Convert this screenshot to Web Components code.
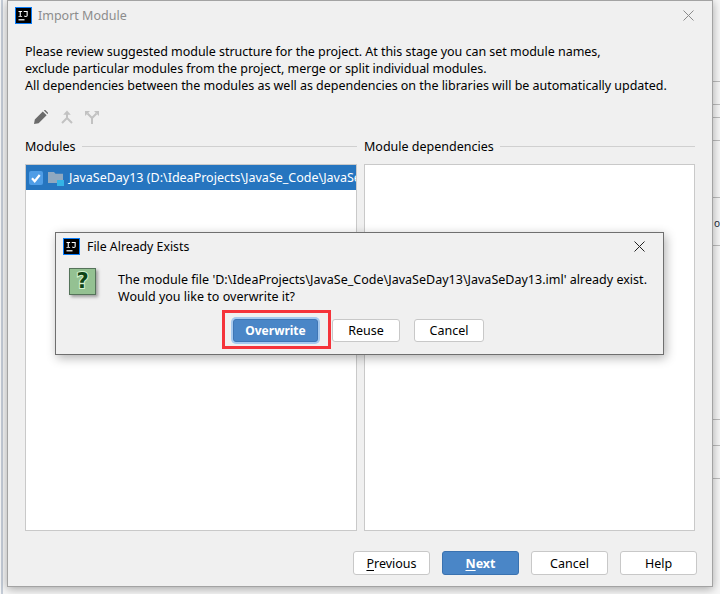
<!DOCTYPE html>
<html>
<head>
<meta charset="utf-8">
<title>Import Module</title>
<style>
  html, body { margin: 0; padding: 0; width: 720px; height: 594px; overflow: hidden; background: #f7f7f7; }
  body { font: 13px "Noto Sans", "Open Sans", sans-serif; color: #000; }
</style>
</head>
<body>
<ij-desktop>
  <ij-window style="left:7px;top:0;width:706px;height:587px" heading="Import Module" dimmed>
    <ij-import-body></ij-import-body>
  </ij-window>
  <ij-window style="left:55px;top:232px;width:609px;height:123px" heading="File Already Exists" front>
    <ij-exists-body></ij-exists-body>
  </ij-window>
  <ij-mark style="left:222px;top:310px;width:103px;height:33px"></ij-mark>
</ij-desktop>

<script>
// IntelliJ logo, used in both title bars
const LOGO = `
<svg width="17" height="17" viewBox="0 0 17 17" style="display:block">
  <rect x="0.5" y="0.5" width="16" height="16" fill="#000" stroke="#087cfa"/>
  <path d="M3.500 4h3.600v.9H5.800v4h1.300v.9H3.500v-.9h1.200v-4H3.500zM8.700 4h4v4.600c0 .9-.7 1.300-1.900 1.300-.7 0-1.300-.2-1.800-.5l.4-.8c.4.2.8.4 1.300.4.6 0 .9-.2.9-.6V4.900H8.700z" fill="#fff"/>
  <rect x="3.500" y="12.200" width="6" height="1.200" fill="#fff"/>
</svg>`;

class IjDesktop extends HTMLElement {
  constructor() {
    super();
    this.attachShadow({ mode: 'open' });
    // rows of the IDE window that is left behind the dialog
    const rows = [81, 104, 117, 140, 197, 245, 419, 445, 478]
      .map(y => `<i style="top:${y}px"></i>`).join('');
    this.shadowRoot.innerHTML = `
      <style>
        :host { display: block; position: relative; width: 720px; height: 594px; overflow: hidden; }
        .edge { position: absolute; left: 1px; top: 0; width: 2px; height: 594px; background: #c5cdd8; }
        .behind { position: absolute; left: 712px; top: 0; width: 8px; height: 594px; }
        .behind i { position: absolute; left: 0; width: 8px; height: 1px; background: #bdbdbd; }
        .behind b { position: absolute; left: 2px; top: 216px; font: 400 10px/14px "Noto Sans", sans-serif; color: #1d2a3a; }
      </style>
      <div class="edge"></div>
      <div class="behind">${rows}<b>o</b></div>
      <slot></slot>`;
  }
}

class IjWindow extends HTMLElement {
  constructor() {
    super();
    this.attachShadow({ mode: 'open' });
    this.shadowRoot.innerHTML = `
      <style>
        :host { display: flex; flex-direction: column; position: absolute; box-sizing: border-box;
                background: #f0f0f0; border: 1px solid #a3a3a3;
                box-shadow: 0 2px 9px rgba(0,0,0,.33); }
        :host([front]) { border-color: #6f6f6f; box-shadow: 2px 3px 10px rgba(0,0,0,.3); }
        .bar { display: flex; align-items: center; flex: none; box-sizing: border-box; height: 30px; padding: 0 18px 4px 7px; gap: 7px; color: #8c8c8c; font-size: 12.3px; }
        :host([dimmed]) .bar { height: 31px; padding: 0 18px 2px 7px; gap: 6px; font-size: 12.5px; }
        :host([front]) .bar { color: #000; }
        .title { flex: 1; }
        svg.x { display: block; }
        .x path { stroke: #8a8a8a; }
        :host([front]) .x path { stroke: #222; }
      </style>
      <div class="bar">
        <span class="logo">${LOGO}</span>
        <span class="title">${this.getAttribute('heading')}</span>
        <svg class="x" width="11" height="11" viewBox="0 0 11 11"><path d="M.5.5l10 10M10.500.5l-10 10" fill="none"/></svg>
      </div>
      <slot></slot>`;
  }
}

class IjButton extends HTMLElement {
  constructor() {
    super();
    this.attachShadow({ mode: 'open' });
    this.shadowRoot.innerHTML = `
      <style>
        :host { display: flex; align-items: center; justify-content: center; box-sizing: border-box;
                width: 77px; height: 24px; background: #fff; border: 1px solid #c8c8c8; border-radius: 3px;
                font-size: 12.5px; color: #000; }
        :host([primary]) { background: #4a86c7; border-color: #3a72b0; color: #fff; font-weight: 700; }
        :host([focused]) { background: #4a86c7; border: 1px solid #3f76b5; color: #fff; font-weight: 700; font-size: 12px;
                           box-shadow: 0 0 0 2px #a5c9ef; }
      </style>
      <slot></slot>`;
  }
}

class IjTitled extends HTMLElement {
  constructor() {
    super();
    this.attachShadow({ mode: 'open' });
    this.shadowRoot.innerHTML = `
      <style>
        :host { display: flex; flex-direction: column; min-width: 0; }
        .head { display: flex; align-items: center; gap: 6px; height: 18px; margin-bottom: 9px; font-size: 12.5px; white-space: nowrap; }
        .head i { flex: 1; height: 1px; background: #d0d0d0; }
        .box { flex: 1; box-sizing: border-box; background: #fff; border: 1px solid #c9c9c9; overflow: hidden; }
      </style>
      <div class="head"><span>${this.getAttribute('label')}</span><i></i></div>
      <div class="box"><slot></slot></div>`;
  }
}

class IjModuleRow extends HTMLElement {
  constructor() {
    super();
    this.attachShadow({ mode: 'open' });
    this.shadowRoot.innerHTML = `
      <style>
        :host { display: flex; align-items: center; height: 25px; padding-left: 3px; gap: 5px;
                background: #2675bf; color: #fff; font-size: 12.5px; white-space: nowrap; overflow: hidden; }
        svg { display: block; flex: none; }
      </style>
      <svg width="14" height="14" viewBox="0 0 14 14">
        <rect width="14" height="14" rx="2" fill="#4f9de6"/>
        <path d="M3 7.300l2.700 2.900 5-6.200" fill="none" stroke="#fff" stroke-width="2.200"/>
      </svg>
      <svg width="16" height="17" viewBox="0 0 16 17">
        <path d="M0 3h6l1.500 1.800H15V14H0z" fill="#8fa8c0"/>
        <rect x="9" y="11" width="7" height="6" fill="#35b4e6"/>
      </svg>
      <span><slot></slot></span>`;
  }
}

class IjImportBody extends HTMLElement {
  constructor() {
    super();
    this.attachShadow({ mode: 'open' });
    this.shadowRoot.innerHTML = `
      <style>
        :host { display: flex; flex-direction: column; flex: 1; min-height: 0; padding: 11px 17px 11px 17px; }
        p { margin: 0; font-size: 12.5px; line-height: 17px; white-space: nowrap; letter-spacing: -.035px; }
        .tools { display: flex; align-items: center; gap: 12px; height: 20px; margin: 13px 0 10px 9px; }
        .tools svg { display: block; }
        .panes { display: grid; grid-template-columns: 332px 331px; gap: 7px; flex: 1; min-height: 0; }
        .foot { display: flex; justify-content: flex-end; gap: 12px; margin: 20px -2px 0 0; }
        u { text-underline-offset: 2px; }
      </style>
      <p>Please review suggested module structure for the project. At this stage you can set module names,<br>
      exclude particular modules from the project, merge or split individual modules.<br>
      All dependencies between the modules as well as dependencies on the libraries will be automatically updated.</p>
      <div class="tools">
        <svg width="14" height="14" viewBox="0 0 14 14"><path d="M0 14l.8-4.600L8.800 1.400l3.800 3.800L4.600 13.200zM9.900.6l.7-.6q.6-.2 1 .2l2.200 2.200q.4.4.2 1l-.6.7z" fill="#6b6b6b"/></svg>
        <svg width="14" height="14" viewBox="0 0 14 14"><path d="M7 .5L3.200 4.800h7.600z" fill="#c2c2c2"/><path d="M7 4v4.500M7 8L2 13M7 8l5 5" fill="none" stroke="#c2c2c2" stroke-width="2"/></svg>
        <svg width="14" height="14" viewBox="0 0 14 14" style="margin-left:-1px"><path d="M0 1h5L0 6zM14 1H9l5 5z" fill="#c2c2c2"/><path d="M7 14V8L2.500 3.500M7 8l4.500-4.500" fill="none" stroke="#c2c2c2" stroke-width="2"/></svg>
      </div>
      <div class="panes">
        <ij-titled label="Modules">
          <ij-module-row>JavaSeDay13 (D:\\IdeaProjects\\JavaSe_Code\\JavaSeDay13)</ij-module-row>
        </ij-titled>
        <ij-titled label="Module dependencies"></ij-titled>
      </div>
      <div class="foot">
        <ij-button><span><u>P</u>revious</span></ij-button>
        <ij-button primary><span><u>N</u>ext</span></ij-button>
        <ij-button>Cancel</ij-button>
        <ij-button>Help</ij-button>
      </div>`;
  }
}

class IjExistsBody extends HTMLElement {
  constructor() {
    super();
    this.attachShadow({ mode: 'open' });
    this.shadowRoot.innerHTML = `
      <style>
        :host { display: flex; flex-direction: column; flex: 1; padding: 5px 16px 0 13px; }
        .msg { display: flex; gap: 22px; }
        .q { flex: none; width: 27px; height: 27px; box-sizing: border-box; background: #94c192;
             border: 1px solid #55735a; box-shadow: 2px 2px 3px rgba(0,0,0,.35);
             display: flex; align-items: center; justify-content: center; }
        .q span { font: 700 21px/1 "DejaVu Sans", sans-serif; color: #0e4416;
                  -webkit-text-stroke: 2px #d4f2cf; paint-order: stroke fill; }
        p { margin: 3px 0 0; font-size: 12.5px; line-height: 17px; white-space: nowrap; letter-spacing: .012px; }
        .foot { display: flex; justify-content: flex-end; gap: 14px; margin-top: 14px; padding-right: 163px; }
        .foot ij-button:nth-child(1) { width: 85px; height: 23px; }
        .foot ij-button:nth-child(2) { width: 68px; height: 23px; }
        .foot ij-button:nth-child(3) { width: 70px; height: 23px; }
      </style>
      <div class="msg">
        <div class="q"><span>?</span></div>
        <p>The module file 'D:\\IdeaProjects\\JavaSe_Code\\JavaSeDay13\\JavaSeDay13.iml' already exist.<br>
        Would you like to overwrite it?</p>
      </div>
      <div class="foot">
        <ij-button focused>Overwrite</ij-button>
        <ij-button>Reuse</ij-button>
        <ij-button>Cancel</ij-button>
      </div>`;
  }
}

// red annotation drawn over the screenshot
class IjMark extends HTMLElement {
  constructor() {
    super();
    this.attachShadow({ mode: 'open' });
    this.shadowRoot.innerHTML = `<style>:host { display: block; position: absolute; border: 3px solid #f5333a; }</style>`;
  }
}

customElements.define('ij-desktop', IjDesktop);
customElements.define('ij-window', IjWindow);
customElements.define('ij-button', IjButton);
customElements.define('ij-titled', IjTitled);
customElements.define('ij-module-row', IjModuleRow);
customElements.define('ij-import-body', IjImportBody);
customElements.define('ij-exists-body', IjExistsBody);
customElements.define('ij-mark', IjMark);
</script>
</body>
</html>
